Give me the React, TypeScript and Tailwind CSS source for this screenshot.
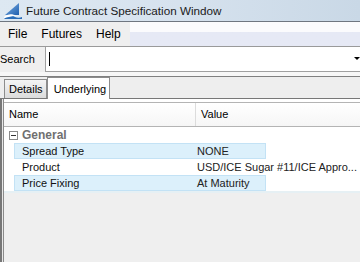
import React from "react";

const rows = [
  { name: "Spread Type", value: "NONE", hl: true },
  { name: "Product", value: "USD/ICE Sugar #11/ICE Appro...", hl: false },
  { name: "Price Fixing", value: "At Maturity", hl: true },
];

function AppIcon() {
  return (
    <svg width="20" height="18" viewBox="0 0 20 18">
      <defs>
        <linearGradient id="sail" x1="0" y1="0" x2="1" y2="1">
          <stop offset="0" stopColor="#7fb2e6" />
          <stop offset="1" stopColor="#1f5fae" />
        </linearGradient>
      </defs>
      <path d="M16 1 L16 13 L2 13 Z" fill="url(#sail)" />
      <path d="M1 17 C5 13 9 13 12 15 C14 16 17 16 19 15 L19 17 Z" fill="#2a6db8" />
      <path d="M1 15 C5 11 10 12 13 13.5 L1 16 Z" fill="#ffffff" />
    </svg>
  );
}

export default function App() {
  return (
    <div className="flex h-[262px] w-[360px] flex-col overflow-hidden bg-[#efefef] font-['Liberation_Sans',Arial,sans-serif] text-[12px] text-black">
      {/* title bar */}
      <div className="flex h-[21px] shrink-0 items-center gap-[3px] bg-gradient-to-r from-[#dde8f2] via-[#d6e2ee] to-[#c9d8e6] pl-[3px]">
        <AppIcon />
        <span className="text-[11.7px] text-[#1a1a1a]">Future Contract Specification Window</span>
      </div>

      {/* menu */}
      <div className="flex h-[25px] shrink-0 items-center border-t border-[#6f7680] bg-gradient-to-b from-[#fbfbfd] from-40% to-[#e6e9f5] to-40%">
        <div className="flex h-full items-center gap-[14px] bg-[#efefef] pl-[8px] pr-[9px]">
          <span>File</span>
          <span>Futures</span>
          <span>Help</span>
        </div>
      </div>

      {/* search */}
      <div className="flex h-[26px] shrink-0 border-t border-[#9a9a9a] text-[11px]">
        <div className="flex w-[45px] items-center bg-[#efefef]">Search</div>
        <div className="relative flex flex-1 items-center border-b border-l border-[#a0a0a0] bg-white pl-[3px]">
          <div className="h-[14px] w-px bg-black" />
          <span className="absolute right-0 top-[10px] h-0 w-0 border-x-[3px] border-t-[3px] border-x-transparent border-t-black" />
        </div>
      </div>

      <div className="h-[4px] shrink-0 bg-[#f7f7f7]" />

      {/* tabs */}
      <div className="flex h-[22px] shrink-0 items-end border-t border-[#808080] bg-[#eeeeee] pl-[4px] text-[11px]">
        <div className="flex h-[19px] items-center border border-b-0 border-[#8c8c8c] bg-gradient-to-b from-[#f4f4f4] to-[#dcdcdc] pl-[4px] pr-[3px]">
          Details
        </div>
        <div className="relative z-10 -mb-px flex h-[22px] items-start border border-b-0 border-[#8c8c8c] bg-white pl-[6px] pr-[3px] pt-[3px]">
          Underlying
        </div>
      </div>

      {/* panel */}
      <div className="flex flex-1 border-l-2 border-t border-[#777777] bg-white text-[11px]">
        <div className="w-[1px] bg-[#e8e8e8]" />
        <div className="flex flex-1 flex-col border-l border-[#8a8a8a] bg-[#efefef]">
          <div className="h-[3px] bg-white" />
          <div className="flex h-[25px] items-center border-y border-[#b4b4b4] bg-gradient-to-b from-white to-[#f6f6f6]">
            <div className="flex h-full w-[192px] items-center border-r border-[#dcdcdc] pl-[5px]">Name</div>
            <div className="pl-[5px]">Value</div>
          </div>
          <div className="flex h-[16px] items-center bg-white pl-[5px]">
            <span className="flex h-[9px] w-[9px] items-center justify-center border border-[#8a8a8a] bg-white">
              <span className="h-px w-[5px] bg-[#333]" />
            </span>
            <span className="ml-[4px] text-[12px] font-bold text-[#707070]">General</span>
          </div>
          {rows.map((r) => (
            <div key={r.name} className="flex h-[16px] bg-white">
              <div className="w-[10px] shrink-0 bg-white" />
              <div
                className={
                  r.hl
                    ? "flex w-[252px] shrink-0 items-center border border-[#c3e2f5] bg-[#dcf0fb]"
                    : "flex w-[252px] shrink-0 items-center border border-white bg-white"
                }
              >
                <div className="w-[182px] shrink-0 pl-[7px] text-[#111]">{r.name}</div>
                <div className="whitespace-nowrap text-[#222]">{r.value}</div>
              </div>
            </div>
          ))}
          <div className="h-[2px] bg-[#e6f0f4]" />
        </div>
      </div>
    </div>
  );
}
